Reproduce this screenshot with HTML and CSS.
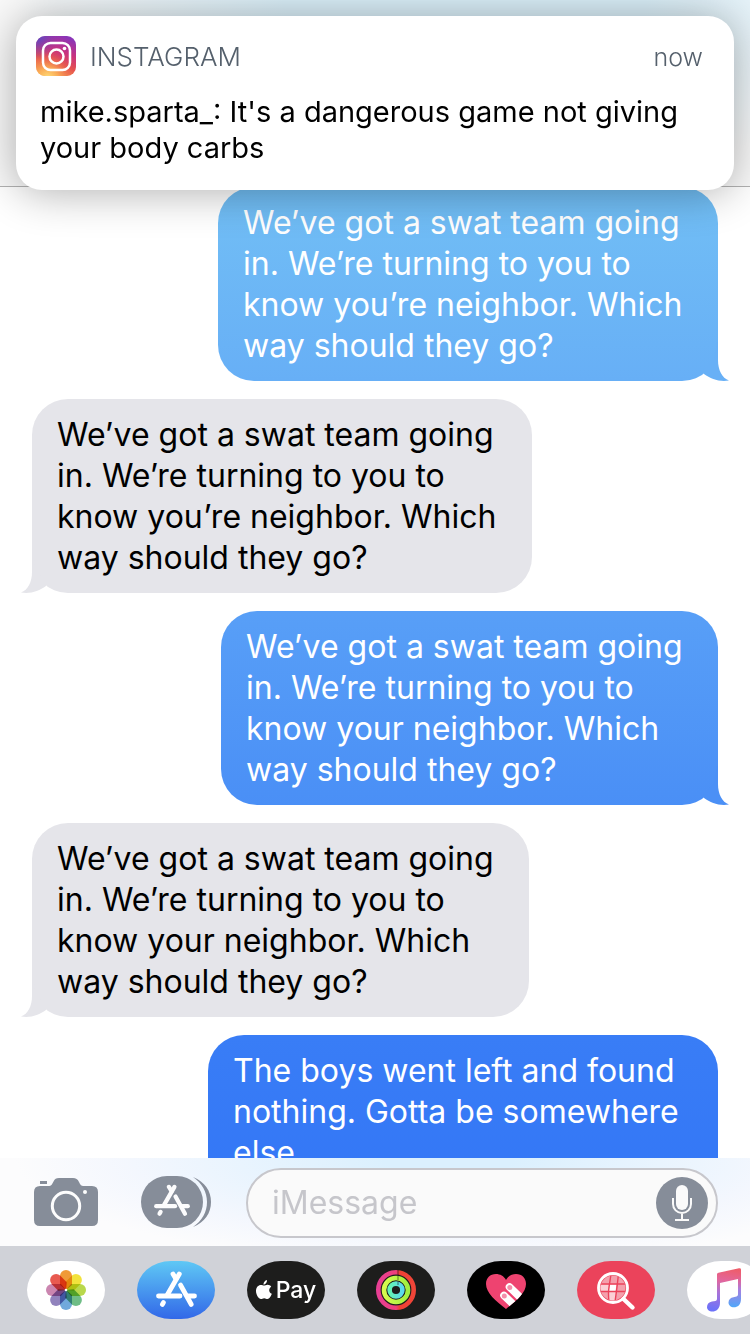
FILE: index.html
```html
<!DOCTYPE html>
<html lang="en">
<head>
<meta charset="utf-8">
<meta name="viewport" content="width=device-width">
<title>Messages</title>
<link rel="stylesheet" href="styles.css">
</head>
<body>
<svg class="defs" aria-hidden="true">
  <defs>
    <path id="tail" d="M24 1V19C24 29 28 37 35 39.500C25 41 17 38 10 33L9 29L20 18L23 1Z"/>
    <g id="store" fill="none" stroke="currentColor" stroke-width="4.800" stroke-linecap="round">
      <path d="M23.300 3L11.500 23.500"/>
      <path d="M17 3L20 8"/>
      <path d="M2.500 25H24"/>
      <path d="M24.500 14L35.300 33.500"/>
      <path d="M32.500 25H38.500"/>
      <path d="M7.500 31.500L6.300 33.500"/>
    </g>
  </defs>
</svg>

<header class="navbar"></header>

<section class="notification" role="alert">
  <div class="notification-head">
    <svg class="insta" viewBox="0 0 40 40" aria-hidden="true">
      <defs>
        <linearGradient id="ig" x1="0.7" y1="0" x2="0.3" y2="1">
          <stop offset="0" stop-color="#8a35b8"/><stop offset=".35" stop-color="#c9327f"/><stop offset=".65" stop-color="#e6524e"/><stop offset="1" stop-color="#f9a54e"/>
        </linearGradient>
        <radialGradient id="ig2" cx=".3" cy="1.05" r=".65">
          <stop offset="0" stop-color="#ffe07a"/><stop offset=".4" stop-color="#fbb158" stop-opacity=".8"/><stop offset="1" stop-color="#e85a4a" stop-opacity="0"/>
        </radialGradient>
        <radialGradient id="ig3" cx="0" cy="0" r=".6">
          <stop offset="0" stop-color="#4c4fc8"/><stop offset="1" stop-color="#7a3abb" stop-opacity="0"/>
        </radialGradient>
      </defs>
      <rect width="40" height="40" rx="9" fill="url(#ig)"/>
      <rect width="40" height="40" rx="9" fill="url(#ig3)"/>
      <rect width="40" height="40" rx="9" fill="url(#ig2)"/>
      <rect x="7" y="7" width="27" height="27" rx="7.500" fill="none" stroke="#fff" stroke-width="2.500"/>
      <circle cx="20.500" cy="20.500" r="7" fill="none" stroke="#fff" stroke-width="2.500"/>
      <circle cx="28.500" cy="12.500" r="1.800" fill="#fff"/>
    </svg>
    <span class="app-name">INSTAGRAM</span>
    <time class="when">now</time>
  </div>
  <p class="notification-text">mike.sparta_: It's a dangerous game not giving your body carbs</p>
</section>

<main class="thread">
  <p class="bubble sent tone-1">We’ve got a swat team going<br>in. We’re turning to you to<br>know you’re neighbor. Which<br>way should they go?<svg class="tail" viewBox="0 0 36 41" aria-hidden="true"><use href="#tail"/></svg></p>
  <p class="bubble received">We’ve got a swat team going<br>in. We’re turning to you to<br>know you’re neighbor. Which<br>way should they go?<svg class="tail" viewBox="0 0 36 41" aria-hidden="true"><use href="#tail"/></svg></p>
  <p class="bubble sent medium tone-2">We’ve got a swat team going<br>in. We’re turning to you to<br>know your neighbor. Which<br>way should they go?<svg class="tail" viewBox="0 0 36 41" aria-hidden="true"><use href="#tail"/></svg></p>
  <p class="bubble received medium">We’ve got a swat team going<br>in. We’re turning to you to<br>know your neighbor. Which<br>way should they go?<svg class="tail" viewBox="0 0 36 41" aria-hidden="true"><use href="#tail"/></svg></p>
  <p class="bubble sent wide tone-3">The boys went left and found<br>nothing. Gotta be somewhere<br>else<br>&nbsp;</p>
</main>

<form class="composer">
  <button class="tool" type="button" aria-label="Camera">
    <svg class="camera" viewBox="0 0 64 48">
      <path fill="currentColor" d="M6 3h7v3H6zM6 8H14C18 8 18 6 19.500 3.500C21 .8 22 0 25 0H39C42 0 43.500 1 45 4C46.500 7 47 8 50 8H58Q64 8 64 14V42Q64 48 58 48H6Q0 48 0 42V14Q0 8 6 8Z"/>
      <circle cx="32" cy="28" r="13.700" fill="none" stroke="#fdfdfd" stroke-width="3"/>
      <circle cx="51" cy="14" r="2" fill="#fdfdfd"/>
    </svg>
  </button>
  <button class="tool" type="button" aria-label="Apps">
    <svg class="apps" viewBox="0 0 70 52">
      <path fill="currentColor" d="M26 0H36A26 26 0 0 1 36 52H26A26 26 0 0 1 26 0Z"/>
      <path fill="currentColor" d="M52 1C64 6 70 15 70 26S64 46 52 51C61 45 66 36 66 26S61 7 52 1Z"/>
      <svg x="13" y="8" width="36" height="33" viewBox="0 0 41 37" color="#fcfcfd"><use href="#store"/></svg>
    </svg>
  </button>
  <div class="field">
    <input class="message" type="text" placeholder="iMessage" aria-label="iMessage">
    <button class="mic" type="button" aria-label="Dictate">
      <svg viewBox="0 0 52 52" fill="none" stroke="#fafafa" stroke-width="2">
        <rect x="20" y="8" width="12" height="25" rx="6" fill="#fafafa" stroke="none"/>
        <path d="M17 21V27A9 9 0 0 0 35 27V21M26 36V43M19 43H33"/>
      </svg>
    </button>
  </div>
</form>

<nav class="strip" aria-label="Apps">
  <button class="pill white" type="button" aria-label="Photos">
    <svg viewBox="0 0 78 58">
      <defs><path id="petal" d="M33 15A6 6 0 0 1 45 15V24L39 29L33 24Z"/></defs>
      <g class="petals">
        <use href="#petal" fill="#f09a37"/>
        <use href="#petal" fill="#f2e23c" transform="rotate(45 39 29)"/>
        <use href="#petal" fill="#b9d84c" transform="rotate(90 39 29)"/>
        <use href="#petal" fill="#6fbd86" transform="rotate(135 39 29)"/>
        <use href="#petal" fill="#71a9dc" transform="rotate(180 39 29)"/>
        <use href="#petal" fill="#9183bd" transform="rotate(225 39 29)"/>
        <use href="#petal" fill="#cb86b0" transform="rotate(270 39 29)"/>
        <use href="#petal" fill="#e85a50" transform="rotate(315 39 29)"/>
      </g>
      <circle cx="39" cy="29" r="1.300" fill="#fff"/>
    </svg>
  </button>
  <button class="pill blue" type="button" aria-label="App Store">
    <svg viewBox="0 0 78 58"><svg x="19" y="10" width="41" height="37" viewBox="0 0 41 37" color="#fff"><use href="#store"/></svg></svg>
  </button>
  <button class="pill dark pay" type="button">
    <svg class="apple" viewBox="0 0 16 20" aria-label="Apple" fill="#fff">
      <path d="M11 0C11.200 2.700 9.300 4.700 7.500 4.700C7.300 2.500 9 .4 11 0Z"/>
      <path d="M8 5.600C9 5.600 10 4.800 11.700 4.800C13 4.800 14.400 5.500 15.200 6.700C12.300 8.400 12.700 12.500 15.800 13.800C15 16.200 13.300 19 11.500 19C10.200 19 9.800 18.200 8.200 18.200C6.600 18.200 6.100 19 4.900 19C2.800 19 0 14.700 0 11C0 7.200 2.400 5 4.800 5C6.200 5 7.300 5.600 8 5.600Z"/>
    </svg>
    <span>Pay</span>
  </button>
  <button class="pill dark" type="button" aria-label="Activity">
    <svg viewBox="0 0 78 58" fill="none" stroke-width="4.600">
      <defs>
        <linearGradient id="r1"><stop offset="0" stop-color="#e83f94"/><stop offset=".5" stop-color="#ee3f7c"/><stop offset=".6" stop-color="#ef4035"/><stop offset="1" stop-color="#f04538"/></linearGradient>
        <linearGradient id="r2"><stop offset="0" stop-color="#d6fb4e"/><stop offset="1" stop-color="#a0ef3f"/></linearGradient>
        <linearGradient id="r3"><stop offset="0" stop-color="#63f4b2"/><stop offset="1" stop-color="#5bd9ee"/></linearGradient>
      </defs>
      <circle cx="39" cy="29" r="17.700" stroke="url(#r1)"/>
      <circle cx="39" cy="29" r="12" stroke="url(#r2)"/>
      <circle cx="39" cy="29" r="6.400" stroke="url(#r3)"/>
      <path d="M41 9V14M41 15V19M41 21V24" stroke="#000" stroke-opacity=".35" stroke-width="1.500"/>
    </svg>
  </button>
  <button class="pill black" type="button" aria-label="Digital Touch">
    <svg viewBox="0 0 78 58">
      <defs><clipPath id="heart"><path d="M39 48C29 40 19 32 19 23C19 17 23 13 29 13C33 13 37 15 39 19C41 15 45 13 49 13C55 13 59 17 59 23C59 32 49 40 39 48Z"/></clipPath></defs>
      <g clip-path="url(#heart)">
        <path fill="#ee4370" d="M18 12H60V49H18z"/>
        <path d="M37 34.500L52 49M42.500 26L60 43" stroke="#fff" stroke-width="7.600" stroke-linecap="round"/>
        <circle cx="37.300" cy="35" r="2.500" fill="#f48fab"/><circle cx="42.800" cy="26.500" r="2.500" fill="#f48fab"/>
      </g>
    </svg>
  </button>
  <button class="pill red" type="button" aria-label="Images">
    <svg viewBox="0 0 78 58">
      <defs><clipPath id="lens"><circle cx="36" cy="27" r="12.500"/></clipPath></defs>
      <g clip-path="url(#lens)">
        <rect x="23" y="14" width="26" height="26" fill="#f4a0ac"/>
        <path fill="#fbd0d6" d="M23 23.500H32V30H23zM32 30H39V40H32z"/>
        <path fill="#fff" d="M33 23.500H39.500L38.500 30H32z"/>
        <path d="M34 13Q33 20 32 26T32 41M41.500 13Q40 27 38 41M23 23H50M23 30.500H50" stroke="#eb435b" stroke-width="1.400" fill="none"/>
      </g>
      <circle cx="36" cy="27" r="14.500" fill="none" stroke="#fff" stroke-width="2.800"/>
      <path d="M46.500 38L55.500 46.500" stroke="#fff" stroke-width="4.400" stroke-linecap="round"/>
    </svg>
  </button>
  <button class="pill white" type="button" aria-label="Music">
    <svg viewBox="0 0 78 58">
      <defs><linearGradient id="mu" x1=".65" y1="0" x2=".5" y2="1"><stop offset="0" stop-color="#ee5d6b"/><stop offset=".3" stop-color="#e2669c"/><stop offset=".6" stop-color="#a873d8"/><stop offset="1" stop-color="#6d72f8"/></linearGradient>
      <linearGradient id="mu2" x1="0" y1="0" x2="0" y2="1"><stop offset="0" stop-color="#e0649a" stop-opacity="0"/><stop offset=".45" stop-color="#a77fe0"/><stop offset="1" stop-color="#4fa8fa"/></linearGradient></defs>
      <path fill="url(#mu)" d="M30 13.500Q30 12 31.500 11.700L52 7.300Q54 7 54 8.500V38H51V18L33 22V42C33 48 29 50.500 25.500 50.500C22 50.500 20 48.500 20 46C20 43 22 41 25 40.500L28.500 40Q30 39.500 30 38Z"/>
      <path fill="url(#mu2)" d="M51 15L54 14V38C54 44 50.500 46.300 47 46.300C43.500 46.300 41.500 44 41.500 41.500C41.500 38.500 43.500 36.800 46.500 36.300L49.500 35.500Q51 35 51 33.500Z"/>
    </svg>
  </button>
</nav>
</body>
</html>
```

FILE: styles.css
```css
* { box-sizing: border-box; }

body {
  margin: 0;
  position: relative;
  display: flex;
  flex-direction: column;
  height: 100vh;
  overflow: hidden;
  background: #fff;
  color: #000;
  font-family: Inter, "Liberation Sans", sans-serif;
}

button {
  margin: 0;
  padding: 0;
  border: 0;
  background: none;
  font: inherit;
}

svg { display: block; }

.defs { position: absolute; width: 0; height: 0; }

.navbar {
  flex: none;
  height: 187px;
  border-bottom: 1px solid #b2b2b2;
  background:
    radial-gradient(ellipse 60% 100% at 62% 0, #daeff9 40%, rgba(240, 248, 252, 0) 100%),
    #f9f9f9;
}

.notification {
  position: absolute;
  top: 16px;
  left: 16px;
  right: 16px;
  z-index: 2;
  padding: 20px 24px 24px 20px;
  border-radius: 26px;
  background: #fff;
  box-shadow: 0 2px 44px rgba(0, 0, 0, 0.32);
}

.notification-head {
  display: flex;
  align-items: flex-start;
  gap: 14px;
  padding-right: 7px;
  color: #55606c;
  font-size: 25px;
  font-weight: 300;
  line-height: 42px;
}

.insta { width: 40px; height: 40px; }

.app-name { font-size: 26px; }

.when { margin-left: auto; }

.notification-text {
  margin: 16px 0 0;
  padding-left: 4px;
  font-size: 29px;
  line-height: 36px;
}

.thread {
  flex: 1;
  min-height: 0;
  overflow: hidden;
  display: flex;
  flex-direction: column;
  gap: 18px;
  padding: 0 32px;
}

.bubble {
  flex: none;
  position: relative;
  width: 500px;
  max-width: 100%;
  margin: 0;
  padding: 15px 25px;
  border-radius: 36px;
  font-size: 32px;
  line-height: 41px;
  white-space: nowrap;
}

.medium { width: 497px; }
.wide { width: 510px; }

.sent { align-self: flex-end; color: #fff; }
.received { align-self: flex-start; background: #e5e5ea; fill: #e5e5ea; }

.tone-1 { background: linear-gradient(#72bff5, #67aff6); fill: #68b0f6; }
.tone-2 { background: linear-gradient(#589ff7, #4a8ff6); fill: #4b90f6; }
.tone-3 { background: linear-gradient(#397df6, #3275f6); }

.tail {
  position: absolute;
  right: -12px;
  bottom: -1px;
  width: 36px;
  height: 41px;
}

.received .tail {
  right: auto;
  left: -12px;
  transform: scaleX(-1);
}

.composer {
  flex: none;
  display: flex;
  align-items: center;
  padding: 10px 32px 8px 34px;
  background:
    radial-gradient(ellipse 58% 120% at 60% 0, #dbf0fe 15%, rgba(242, 246, 254, 0.8) 75%, rgba(252, 252, 254, 0) 100%),
    #fcfcfd;
}

.tool { padding-bottom: 2px; color: #868d99; }
.camera { width: 64px; height: 48px; }
.apps { width: 70px; height: 52px; }
.tool + .tool { margin-left: 43px; }

.field {
  flex: 1;
  min-width: 0;
  display: flex;
  align-items: center;
  height: 70px;
  margin-left: 35px;
  padding: 0 8px 0 24px;
  border: 2px solid #c7c7cc;
  border-radius: 35px;
  background: #fafafa;
}

.message {
  flex: 1;
  min-width: 0;
  padding: 0;
  border: 0;
  outline: 0;
  background: none;
  font: 32px/40px Inter, "Liberation Sans", sans-serif;
}

.message::placeholder { color: #c6c6cb; opacity: 1; }

.mic {
  width: 52px;
  height: 52px;
  border-radius: 50%;
  background: #868d99;
}

.strip {
  flex: none;
  display: flex;
  gap: 32px;
  height: 88px;
  padding: 15px 0 15px 27px;
  overflow: hidden;
  background: #d0d2d8;
}

.pill {
  flex: none;
  width: 78px;
  height: 58px;
  border-radius: 34px / 29px;
  overflow: hidden;
}

.white { background: #fff; }
.blue { background: linear-gradient(#5fc8f5, #3268e8); }
.dark { background: #1d1d1c; }
.black { background: #000; }
.red { background: #eb435b; }

.petals { isolation: isolate; }
.petals use { mix-blend-mode: multiply; }

.pay {
  display: flex;
  align-items: center;
  justify-content: center;
  gap: 4px;
  color: #fff;
  font-size: 23px;
  font-weight: 500;
}

.apple { width: 16px; height: 20px; }
```
